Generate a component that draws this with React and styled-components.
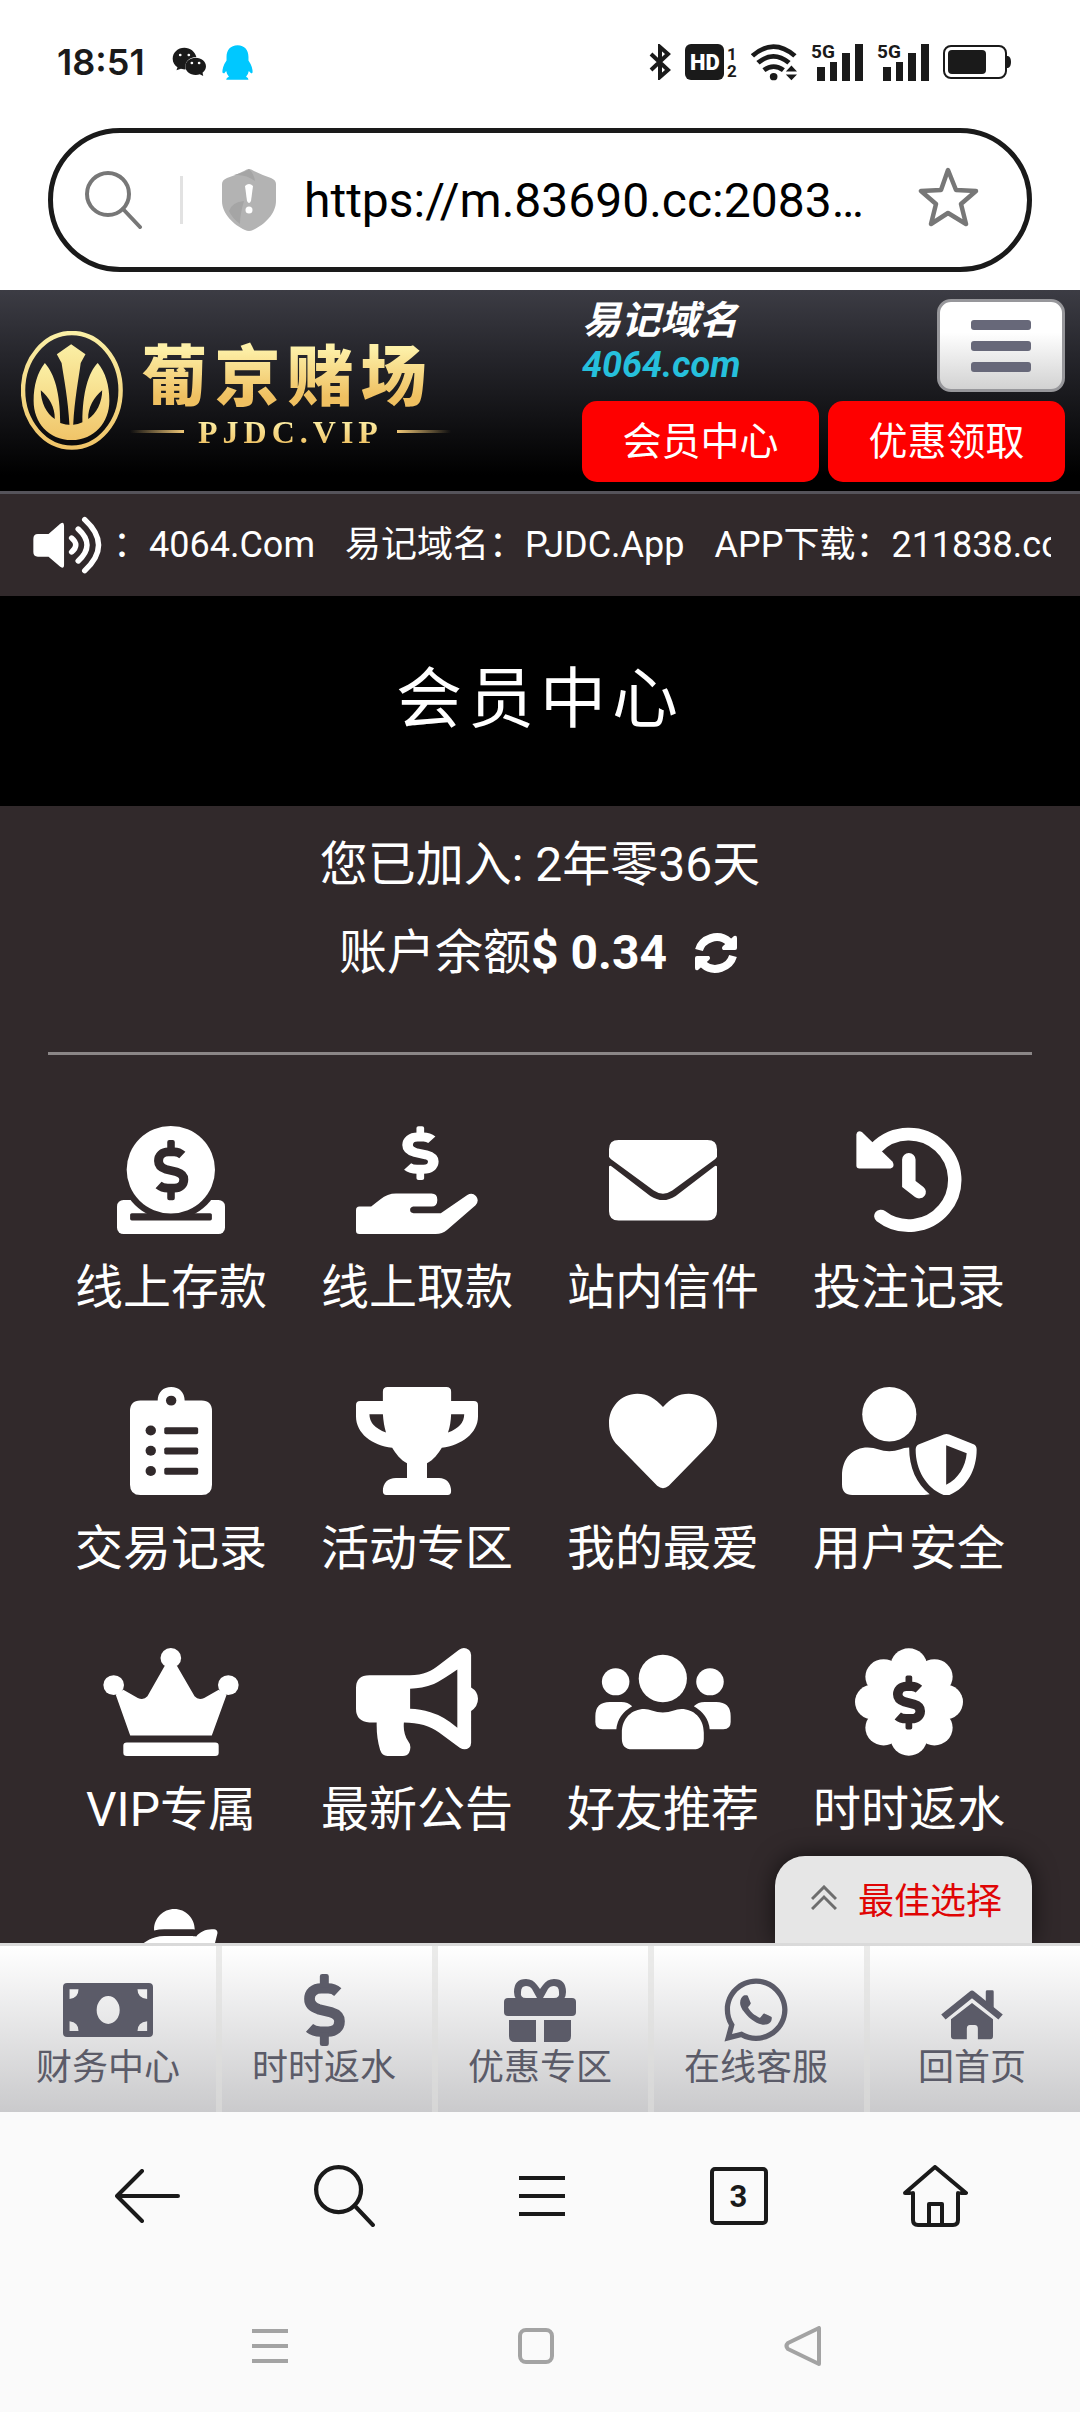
import React from "react";
import styled, { createGlobalStyle, css } from "styled-components";
import { FaWhatsapp } from "react-icons/fa";
import { FaPiggyBank } from "react-icons/fa6";

const INK = "#1a1a1a";
const BODY = "#31292b";
const SLATE = "#5b5b68";

const GlobalStyle = createGlobalStyle`
  *, *::before, *::after { box-sizing: border-box; }
  body {
    margin: 0;
    background: #fff;
    font-family: Roboto, "Noto Sans CJK SC", sans-serif;
    -webkit-font-smoothing: antialiased;
  }
  button, input { font: inherit; color: inherit; }
  svg { display: block; flex: none; }
`;

const plainButton = css`
  display: flex;
  align-items: center;
  justify-content: center;
  margin: 0;
  padding: 0;
  border: 0;
  background: none;
  cursor: pointer;
`;

/* ---------- frame ---------- */

const Page = styled.div`
  display: flex;
  flex-direction: column;
  height: 100vh;
  overflow: hidden;
`;

const StatusBar = styled.div`
  display: flex;
  align-items: center;
  justify-content: space-between;
  flex: none;
  height: 124px;
  padding: 0 69px 0 57px;
  color: ${INK};
`;

const StatusGroup = styled.div`
  display: flex;
  align-items: center;
  gap: ${(p) => p.$gap}px;
`;

const Clock = styled.time`
  margin-right: 12px;
  font: 600 36px/44px Inter, sans-serif;
`;

const AddressArea = styled.div`
  flex: none;
  padding: 4px 48px 18px;
`;

const AddressBar = styled.form`
  display: flex;
  align-items: center;
  height: 144px;
  padding: 0 48px 0 32px;
  border: 5px solid ${INK};
  border-radius: 72px;
`;

const IconButton = styled.button`
  ${plainButton}
  color: ${(p) => p.$tone || INK};
`;

const BarDivider = styled.span`
  width: 3px;
  height: 48px;
  margin: 0 39px 0 37px;
  background: #e2e2e2;
`;

const AddressInput = styled.input`
  flex: 1;
  min-width: 0;
  margin-left: 28px;
  padding: 2px 0 0;
  border: 0;
  outline: 0;
  background: none;
  color: #000;
  font-size: 48px;
  line-height: 64px;
`;

/* ---------- site header ---------- */

const SiteHeader = styled.header`
  display: flex;
  align-items: center;
  justify-content: space-between;
  flex: none;
  padding: 9px 15px 9px 21px;
  border-bottom: 3px solid #55535a;
  background: linear-gradient(#3c3c44, #26262c 32%, #000 92%);
  color: #fff;
`;

const Logo = styled.a`
  display: flex;
  align-items: center;
  gap: 7px;
  text-decoration: none;
`;

const Wordmark = styled.span`
  display: flex;
  flex-direction: column;
  align-items: center;
  gap: 4px;
  padding-top: 4px;
`;

const goldText = css`
  background: linear-gradient(#fdf0a8 20%, #efc061 85%);
  background-clip: text;
  -webkit-background-clip: text;
  color: transparent;
`;

const BrandName = styled.span`
  ${goldText}
  margin-right: 6px;
  font: 900 66px/74px "Noto Sans CJK SC", sans-serif;
  letter-spacing: 7px;
`;

const BrandDomain = styled.span`
  display: flex;
  align-items: center;
  gap: 14px;
`;

const BrandDomainText = styled.span`
  ${goldText}
  font: 700 32px/40px "Liberation Serif", serif;
  letter-spacing: 5px;
`;

const BrandRule = styled.span`
  width: 54px;
  height: 3px;
  background: linear-gradient(${(p) => p.$to}, transparent, #efc777);
`;

const HeaderActions = styled.div`
  display: grid;
  grid-template-columns: 1fr 1fr;
  gap: 9px;
  width: 483px;
`;

const HeaderTop = styled.div`
  grid-column: 1 / -1;
  display: flex;
  justify-content: space-between;
`;

const EasyDomain = styled.div`
  font-size: 39px;
  font-style: italic;
  font-weight: 700;
  line-height: 44px;
`;

const DomainLink = styled.a`
  display: block;
  color: #26c0dc;
  font-size: 36px;
  text-decoration: none;
`;

const MenuButton = styled.button`
  ${plainButton}
  flex-direction: column;
  gap: 11px;
  width: 128px;
  height: 93px;
  border: 3px solid #97979b;
  border-radius: 14px;
  background: linear-gradient(#fff 35%, #d2d2d2);
`;

const MenuLine = styled.span`
  width: 60px;
  height: 10px;
  border-radius: 3px;
  background: #676879;
`;

const RedButton = styled.button`
  ${plainButton}
  height: 81px;
  padding-bottom: 8px;
  border-radius: 15px;
  background: #fe0000;
  font-size: 39px;
`;

/* ---------- notice ---------- */

const Notice = styled.div`
  display: flex;
  align-items: center;
  flex: none;
  height: 102px;
  padding: 0 29px 0 33px;
  gap: 11px;
  background: ${BODY};
  color: #fff;
`;

const NoticeText = styled.p`
  display: flex;
  gap: 30px;
  flex: 1;
  min-width: 0;
  margin: 0;
  overflow: hidden;
  font-size: 36px;
  line-height: 56px;
  white-space: nowrap;
`;

/* ---------- member area ---------- */

const PageTitle = styled.h1`
  flex: none;
  height: 210px;
  margin: 0;
  background: #000;
  color: #fff;
  font-size: 66px;
  font-weight: 400;
  letter-spacing: 6px;
  line-height: 208px;
  text-align: center;
`;

const Main = styled.main`
  position: relative;
  flex: 1;
  min-height: 0;
  padding: 15px 48px 0;
  overflow: hidden;
  background: ${BODY};
  color: #fff;
`;

const Account = styled.section`
  display: flex;
  flex-direction: column;
  align-items: center;
  padding-bottom: 55px;
  border-bottom: 3px solid #8b8687;
  font-size: 48px;
`;

const AccountLine = styled.div`
  display: flex;
  align-items: center;
  line-height: 88px;
`;

const Refresh = styled.button`
  ${plainButton}
  padding: 0 4px 0 28px;
`;

const Tiles = styled.nav`
  display: grid;
  grid-template-columns: repeat(4, 1fr);
  row-gap: 71px;
  padding-top: 71px;
`;

const Tile = styled.a`
  display: flex;
  flex-direction: column;
  align-items: center;
  gap: 26px;
  color: #fff;
  font-size: 48px;
  line-height: 56px;
  text-decoration: none;
`;

const BestPick = styled.button`
  ${plainButton}
  position: absolute;
  right: 48px;
  bottom: 0;
  gap: 21px;
  width: 257px;
  height: 87px;
  padding: 0 0 4px 6px;
  border-radius: 30px 30px 0 0;
  background: #e6e6e6;
  box-shadow: 0 0 24px rgba(0, 0, 0, 0.6);
  color: #e00505;
  font-size: 36px;
`;

/* ---------- bottom bars ---------- */

const TabBar = styled.nav`
  display: grid;
  grid-template-columns: repeat(5, 1fr);
  flex: none;
  height: 169px;
  border-top: 3px solid #dadada;
  background: linear-gradient(#fff, #cacacc);
`;

const Tab = styled.a`
  display: flex;
  flex-direction: column;
  align-items: center;
  padding: 28px 6px 0 0;
  border-left: 6px solid rgba(222, 222, 220, 0.6);
  color: ${SLATE};
  font-size: 36px;
  line-height: 44px;
  text-decoration: none;

  &:first-child {
    padding-right: 0;
    border-left: 0;
  }
`;

const TabIcon = styled.span`
  display: flex;
  align-items: center;
  justify-content: center;
  height: 72px;
`;

const BrowserBar = styled.div`
  display: grid;
  grid-template-columns: repeat(5, 1fr);
  flex: none;
  height: 168px;
  padding: 0 46px 0 49px;
  background: #fafafa;
`;

const TabCount = styled.span`
  display: flex;
  align-items: center;
  justify-content: center;
  width: 58px;
  height: 58px;
  border: 4px solid ${INK};
  border-radius: 5px;
  font-size: 31px;
  font-weight: 700;
`;

const SystemBar = styled.div`
  display: grid;
  grid-template-columns: repeat(3, 1fr);
  flex: none;
  height: 132px;
  padding: 0 145px 0 137px;
  background: #fafafa;
`;

/* ---------- drawings ---------- */

function Glyph({ box, w, h, children, ...rest }) {
  return (
    <svg viewBox={box} width={w} height={h} preserveAspectRatio="none" fill="currentColor" aria-hidden="true" {...rest}>
      {children}
    </svg>
  );
}

function DollarShape({ transform, color = "currentColor", weight = 31 }) {
  return (
    <g transform={transform}>
      <path
        d="M98 54 Q86 43 70 43 H50 C29 43 16 56 16 75 C16 92 27 100 42 105 L78 114 C94 119 103 128 103 141 C103 160 90 172 70 172 H48 C34 172 25 169 16 161"
        fill="none"
        stroke={color}
        strokeWidth={weight}
      />
      <path d="M46 40 V7 Q46 0 53 0 H65 Q72 0 72 7 V40Z M46 175 V208 Q46 215 53 215 H65 Q72 215 72 208 V175Z" fill={color} />
    </g>
  );
}

const WeChat = () => (
  <Glyph box="498 141 102 90" w={35} h={30}>
    <path d="M534 143 C515 143 500 157 500 176 C500 188 506 196 514 202 L511 211 L524 206 Q535 209 538 208 C533 186 548 171 569 171 C565 154 551 143 534 143Z" />
    <path d="M567 173 C550 173 537 184 537 199 C537 214 550 225 567 225 Q574 225 579 223 L589 228 L587 218 Q597 210 597 199 C597 184 584 173 567 173Z" />
    <g fill="#fff">
      <circle cx="522" cy="165" r="4" />
      <circle cx="547" cy="165" r="4" />
      <circle cx="556" cy="189" r="4" />
      <circle cx="577" cy="189" r="4" />
    </g>
  </Glyph>
);

const Penguin = () => (
  <Glyph box="644 134 89 104" w={31} h={35} fill="#00c8ff">
    <path d="M689 135 C668 135 657 150 657 170 L657 180 Q645 198 645 216 L650 219 L656 211 Q658 222 664 228 Q656 231 656 237 H720 Q720 231 713 228 Q719 222 721 211 L728 219 L732 216 Q732 198 720 180 V170 C720 150 709 135 689 135Z" />
  </Glyph>
);

const Bluetooth = () => (
  <Glyph box="0 0 22 36" w={22} h={36}>
    <path d="M2 10 L19 26 L11 33 V3 L19 10 L2 26" fill="none" stroke="currentColor" strokeWidth="4" />
  </Glyph>
);

const HdBadge = () => (
  <svg width="52" height="44" viewBox="0 -3 52 44" fill={INK} fontFamily="Roboto, sans-serif" fontWeight="700">
    <rect x="0" y="1" width="39" height="36" rx="6" />
    <text x="5" y="27" fontSize="22" fontWeight="900" fill="#fff">HD</text>
    <text x="42" y="17" fontSize="17">1</text>
    <text x="42" y="34" fontSize="17">2</text>
  </svg>
);

const Wifi = () => (
  <Glyph box="612 130 132 112" w={46} h={37}>
    <g fill="none" stroke="currentColor" strokeWidth="14">
      <path d="M616 166 Q676 110 738 166" />
      <path d="M632 187 Q676 148 721 187" />
      <path d="M649 209 Q677 188 705 209" />
    </g>
    <circle cx="677" cy="229" r="11" />
    <path d="M728 195 L744 213 H712Z M728 240 L744 222 H712Z" />
  </Glyph>
);

const Signal = () => (
  <svg width="52" height="44" viewBox="0 -3 52 44" fill={INK}>
    <text x="0" y="15" fontFamily="Roboto, sans-serif" fontSize="19" fontWeight="700">5G</text>
    <path d="M6 24h8v14H6z M19 19h7v19h-7z M31 10h8v28h-8z M44 1h8v37h-8z" />
  </svg>
);

const Battery = () => (
  <svg width="68" height="36" viewBox="0 0 68 36">
    <rect x="1" y="2" width="62" height="32" rx="7" fill="none" stroke={INK} strokeWidth="2" />
    <rect x="5" y="6" width="38" height="24" rx="4" fill={INK} />
    <path d="M64 12 h1 q3 1 3 6 t-3 6 h-1z" fill={INK} />
  </svg>
);

const Magnifier = ({ size, weight }) => (
  <svg width={size} height={size} viewBox="0 0 58 58" fill="none" stroke="currentColor" strokeWidth={weight} strokeLinecap="round">
    <circle cx="23" cy="23" r="21" />
    <path d="M38 38 L55 56" />
  </svg>
);

const ShieldAlert = () => (
  <svg width="54" height="62" viewBox="0 0 54 62">
    <path d="M27 0 Q29 0 32 2 Q40 6 49 9 Q54 11 54 15 V32 C54 45 42 56 31 61 Q27 63 23 61 C12 56 0 45 0 32 V15 Q0 11 5 9 Q14 6 22 2 Q25 0 27 0Z" fill="#b3b3b3" />
    <path d="M12 6 Q24 3 27 0 Q32 5 33 12 Q24 5 12 6Z M7 42 Q10 33 22 32 Q18 45 18 55 Q10 49 7 42Z" fill="#a5a5a5" />
    <path d="M23 17 Q27 13 31 17 L29 32 Q27 36 25 32Z" fill="#fff" />
    <circle cx="27" cy="41" r="3.5" fill="#fff" />
  </svg>
);

const Star = () => (
  <svg width="61" height="66" viewBox="0 0 61 66" fill="none" stroke="#777" strokeWidth="4.5" strokeLinejoin="round">
    <path d="M30 3 L38 23 L58 24 L43 37 L48 57 L30 46 L13 57 L18 37 L3 24 L23 23Z" />
  </svg>
);

const Emblem = () => (
  <Glyph box="60 126 299 357" w={102} h={119}>
    <defs>
      <linearGradient id="gold" x1="0" y1="0" x2="0" y2="1">
        <stop offset="0" stopColor="#fbf0a6" />
        <stop offset="1" stopColor="#f0c468" />
      </linearGradient>
    </defs>
    <ellipse cx="209" cy="304" rx="143" ry="172" fill="none" stroke="url(#gold)" strokeWidth="13" />
    <path fill="url(#gold)" d="M207 166 L249 196 L235 222 C229 270 217 330 213 408 H202 C198 330 186 270 179 222 L165 196Z" />
    <path
      fill="url(#gold)"
      fillRule="evenodd"
      d="M130 222 C108 250 97 290 97 335 C97 400 140 453 209 453 C275 453 319 400 319 335 C319 290 308 250 285 222 C258 250 240 310 240 400 Q225 408 209 408 Q190 408 175 402 C175 310 158 255 130 222Z M118 304 C118 340 135 375 159 390 C160 355 142 325 118 304Z M298 304 C298 340 281 375 257 390 C256 355 274 325 298 304Z"
    />
  </Glyph>
);

const Speaker = () => (
  <Glyph box="96 676 200 174" w={69} h={58}>
    <path d="M97 745 Q97 730 110 730 H141 L175 699 Q186 691 186 705 V824 Q186 836 175 828 L141 798 H110 Q97 798 97 784Z" />
    <g fill="none" stroke="currentColor" strokeWidth="16" strokeLinecap="round">
      <path d="M208 742 Q232 763 208 784" />
      <path d="M227 715 Q278 763 227 811" />
      <path d="M246 687 Q326 763 246 840" />
    </g>
  </Glyph>
);

const RefreshIcon = () => (
  <svg width="42" height="40" viewBox="0 0 42 40" fill="none" stroke="#fff" strokeWidth="8">
    <path d="M4 17 C7 6 23 -1 34 9" />
    <path d="M38 23 C35 34 19 41 8 31" />
    <path fill="#fff" stroke="none" d="M39 3 Q42 2 42 5 V15 Q42 17 40 17 H28 Q26 15 28 13Z M3 37 Q0 38 0 35 V25 Q0 23 2 23 H14 Q16 25 14 27Z" />
  </svg>
);

const Deposit = () => (
  <Glyph box="340 138 313 326" w={108} h={108}>
    <defs>
      <mask id="coin-slot">
        <rect x="340" y="138" width="313" height="327" fill="#fff" />
        <ellipse cx="496" cy="269" rx="147" ry="152" fill="#000" />
        <rect x="378" y="401" width="237" height="22" rx="5" fill="#000" />
      </mask>
    </defs>
    <rect x="340" y="361" width="313" height="103" rx="19" mask="url(#coin-slot)" />
    <ellipse cx="496" cy="270" rx="128" ry="132" />
    <DollarShape transform="translate(447 180) scale(.84 .846)" color={BODY} />
  </Glyph>
);

const Withdraw = () => (
  <Glyph box="1034 138 354 326" w={122} h={108}>
    <DollarShape transform="translate(1170 139) scale(.857 .753)" weight={36} />
    <path d="M1034 392 Q1034 381 1044 381 H1078 L1105 359 Q1125 342 1150 342 H1253 Q1270 342 1270 361 Q1270 381 1253 381 H1200 Q1191 383 1191 391 Q1191 401 1201 401 H1280 L1357 346 Q1371 337 1382 349 Q1393 363 1381 377 L1298 452 Q1285 464 1265 464 H1044 Q1034 464 1034 454Z" />
  </Glyph>
);

const Mail = () => (
  <Glyph box="200 138 314 326" w={108} h={108}>
    <path d="M200 231 V208 Q200 180 228 180 H486 Q514 180 514 208 V231 Q512 235 508 238 L384 333 Q357 352 330 333 L206 238 Q202 235 200 231Z" />
    <path d="M200 260 Q203 256 208 260 L320 349 Q357 374 394 349 L506 260 Q511 256 514 260 V395 Q514 423 486 423 H228 Q200 423 200 395Z" />
  </Glyph>
);

const History = () => (
  <Glyph box="915 138 313 326" w={108} h={108}>
    <path d="M977 203 A133 138 0 1 1 990 410" fill="none" stroke="currentColor" strokeWidth="39" strokeLinecap="round" />
    <path d="M919 164 Q922 150 935 156 L1024 246 Q1032 262 1018 266 H928 Q919 266 919 257Z" />
    <path d="M1071 239 V313 L1101 337" fill="none" stroke="currentColor" strokeWidth="39" strokeLinecap="round" />
  </Glyph>
);

const Clipboard = () => (
  <Glyph box="378 922 237 325" w={82} h={108}>
    <path d="M378 995 Q378 963 408 963 H458 C458 938 474 922 497 922 C520 922 536 938 536 963 H585 Q615 963 615 995 V1216 Q615 1247 585 1247 H408 Q378 1247 378 1216Z" />
    <g fill={BODY}>
      <circle cx="497" cy="963" r="15" />
      {[1053, 1114, 1175].map((y) => (
        <React.Fragment key={y}>
          <circle cx="438" cy={y} r="15" />
          <rect x="477" y={y - 10} width="98" height="21" rx="5" />
        </React.Fragment>
      ))}
    </g>
  </Glyph>
);

const Trophy = () => (
  <Glyph box="1034 921 354 326" w={122} h={108}>
    <path
      fillRule="evenodd"
      d="M1112 935 Q1112 921 1126 921 H1296 Q1310 921 1310 935 V963 H1376 Q1388 963 1388 975 V1010 C1388 1060 1340 1098 1283 1104 C1272 1122 1260 1140 1240 1151 V1196 H1275 C1296 1196 1310 1212 1310 1235 Q1310 1247 1300 1247 H1122 Q1112 1247 1112 1235 C1112 1212 1126 1196 1150 1196 H1182 V1151 C1162 1140 1150 1122 1139 1104 C1080 1098 1034 1060 1034 1010 V975 Q1034 963 1046 963 H1112Z M1073 1003 H1112 Q1114 1035 1121 1058 Q1073 1040 1073 1003Z M1310 1003 H1348 Q1348 1040 1301 1058 Q1309 1035 1310 1003Z"
    />
  </Glyph>
);

const Heart = () => (
  <Glyph box="200 922 316 325" w={108} h={108}>
    <path d="M358 982 C335 955 312 942 283 942 C233 942 200 985 200 1030 C200 1060 208 1078 226 1098 L341 1219 Q358 1234 375 1219 L490 1098 C508 1078 516 1060 516 1030 C516 985 483 942 433 942 C404 942 381 955 358 982Z" />
  </Glyph>
);

const UserShield = () => (
  <Glyph box="875 922 394 325" w={135} h={108}>
    <ellipse cx="1013" cy="1004" rx="79" ry="82" />
    <path d="M875 1190 C875 1135 907 1104 950 1104 Q968 1104 980 1109 Q1013 1122 1046 1109 Q1055 1104 1071 1104 C1071 1165 1092 1212 1131 1245 Q1120 1247 1115 1247 H905 Q875 1247 875 1215Z" />
    <path
      fillRule="evenodd"
      d="M1172 1065 Q1180 1062 1188 1065 L1259 1094 Q1268 1098 1268 1110 C1268 1170 1240 1225 1190 1246 Q1180 1250 1170 1246 C1120 1225 1090 1170 1090 1110 Q1090 1098 1100 1094Z M1179 1097 V1216 C1215 1198 1236 1160 1239 1121Z"
    />
  </Glyph>
);

const Crown = () => (
  <Glyph box="299 144 395 326" w={136} h={108}>
    <circle cx="496" cy="174" r="30" />
    <circle cx="330" cy="256" r="30" />
    <circle cx="663" cy="256" r="30" />
    <path d="M378 408 L336 285 L358 270 L400 295 Q417 303 428 290 L478 198 H514 L565 290 Q576 303 593 295 L635 270 L658 285 L615 408Z" />
    <rect x="358" y="429" width="277" height="41" rx="10" />
  </Glyph>
);

const Bullhorn = () => (
  <Glyph box="1034 144 354 326" w={122} h={108}>
    <path
      fillRule="evenodd"
      d="M1034 265 Q1034 226 1073 226 H1190 C1230 226 1255 212 1275 195 L1333 149 Q1348 139 1362 150 Q1368 156 1368 165 V263 Q1388 275 1388 297 Q1388 320 1368 334 V430 Q1368 440 1362 445 Q1350 455 1335 445 L1275 399 C1250 380 1215 369 1173 369 Q1170 400 1185 425 Q1197 440 1188 460 Q1182 470 1170 470 H1125 Q1110 470 1104 452 Q1093 415 1094 369 H1073 Q1034 365 1034 328Z M1191 267 Q1225 267 1260 253 Q1285 240 1328 209 V385 Q1290 350 1250 338 Q1220 327 1191 327Z"
    />
  </Glyph>
);

const sideFriend = "M161 350 Q161 307 203 307 H236 Q256 307 268 320 Q226 345 222 389 H182 Q161 389 161 367Z";

const Friends = () => (
  <Glyph box="160 144 395 326" w={136} h={108}>
    <ellipse cx="357" cy="236" rx="70" ry="72" />
    <ellipse cx="220" cy="246" rx="40" ry="41" />
    <ellipse cx="494" cy="246" rx="40" ry="41" />
    <path d="M238 400 C238 355 268 328 303 328 Q316 328 325 333 Q357 345 389 333 Q398 328 411 328 C446 328 476 355 476 400 V418 Q476 450 446 450 H268 Q238 450 238 418Z" />
    <path d={sideFriend} />
    <path d={sideFriend} transform="translate(715 0) scale(-1 1)" />
  </Glyph>
);

const RebateBadge = () => (
  <Glyph box="915 144 313 326" w={108} h={108}>
    <circle cx="1071" cy="307" r="110" />
    {[[1071, 198], [1071, 416], [968, 307], [1175, 307], [998, 231], [1145, 231], [998, 385], [1145, 385]].map(([x, y]) => (
      <circle key={`${x}-${y}`} cx={x} cy={y} r="53" />
    ))}
    <DollarShape transform="translate(1027 227) scale(.748 .758)" color={BODY} weight={37} />
  </Glyph>
);

const Banknote = () => (
  <Glyph box="183 1152 261 161" w={90} h={54}>
    <path
      fillRule="evenodd"
      d="M183 1164 Q183 1152 195 1152 H432 Q444 1152 444 1164 V1301 Q444 1313 432 1313 H195 Q183 1313 183 1301Z M202 1171 V1200 Q228 1197 228 1171Z M427 1171 V1200 Q399 1197 399 1171Z M202 1295 V1266 Q228 1269 228 1295Z M427 1295 V1266 Q399 1269 399 1295Z M314 1191 A33 41 0 1 0 314 1274 A33 41 0 1 0 314 1191Z"
    />
  </Glyph>
);

const Dollar = () => (
  <Glyph box="0 0 119 215" w={41} h={72}>
    <DollarShape />
  </Glyph>
);

const Gift = () => (
  <Glyph box="0 0 72 63" w={72} h={63}>
    <path d="M5 41 H32 V63 H11 Q5 63 5 57Z M40 41 H67 V57 Q67 63 61 63 H40Z" />
    <rect x="0" y="19" width="72" height="18" rx="4" />
    <path
      fillRule="evenodd"
      d="M12 20 Q10 17 10 13 Q10 0 22 0 Q29 0 33 6 L36 10 L39 6 Q43 0 50 0 Q62 0 62 13 Q62 17 60 20Z M17 13 Q16 19 22 19 H33 L28 10 Q26 7 22 7 Q17 7 17 13Z M55 13 Q55 7 50 7 Q46 7 44 10 L39 19 H50 Q56 19 55 13Z"
    />
  </Glyph>
);

const House = () => (
  <Glyph box="1164 1124 180 216" w={62} h={72}>
    <path d="M1171 1253 L1254 1184 L1337 1253" fill="none" stroke="currentColor" strokeWidth="20" strokeLinejoin="round" />
    <path d="M1294 1177 Q1294 1173 1298 1173 H1313 Q1317 1173 1317 1177 V1232 L1294 1212Z" />
    <path d="M1193 1260 L1254 1211 L1315 1260 V1310 Q1315 1320 1307 1320 H1271 V1288 Q1271 1277 1262 1277 H1248 Q1239 1277 1239 1288 V1320 H1202 Q1193 1320 1193 1311Z" />
  </Glyph>
);

const UpChevrons = () => (
  <svg width="26" height="25" viewBox="0 0 26 25" fill="none" stroke="#6e6e6e" strokeWidth="3">
    <path d="M1 14 L13 2 L25 14 M1 24 L13 12 L25 24" />
  </svg>
);

const lineArt = { fill: "none", stroke: "currentColor", strokeWidth: 4, strokeLinecap: "round", strokeLinejoin: "round" };

const BackArrow = () => (
  <svg width="65" height="54" viewBox="0 0 65 54" {...lineArt}>
    <path d="M27 2 L2 27 L27 52 M2 27 H63" />
  </svg>
);

const Lines = () => (
  <svg width="46" height="40" viewBox="0 0 46 40" {...lineArt} strokeLinecap="butt">
    <path d="M0 2 H46 M0 20 H46 M0 38 H46" />
  </svg>
);

const HomeOutline = () => (
  <svg width="65" height="62" viewBox="0 0 65 62" {...lineArt}>
    <path d="M7 28 H2 L32 2 L63 28 H58 M10 28 V55 Q10 60 15 60 H50 Q55 60 55 55 V28 M26 59 V39 H39 V59" />
  </svg>
);

const notices = ["：4064.Com", "易记域名：PJDC.App", "APP下载：211838.com"];

const tiles = [
  ["线上存款", Deposit],
  ["线上取款", Withdraw],
  ["站内信件", Mail],
  ["投注记录", History],
  ["交易记录", Clipboard],
  ["活动专区", Trophy],
  ["我的最爱", Heart],
  ["用户安全", UserShield],
  ["VIP专属", Crown],
  ["最新公告", Bullhorn],
  ["好友推荐", Friends],
  ["时时返水", RebateBadge],
];

const tabs = [
  ["财务中心", Banknote],
  ["时时返水", Dollar],
  ["优惠专区", Gift],
  ["在线客服", () => <FaWhatsapp size={72} />],
  ["回首页", House],
];

export default function App() {
  return (
    <Page>
      <GlobalStyle />

      <StatusBar>
        <StatusGroup $gap={15}>
          <Clock>18:51</Clock>
          <WeChat />
          <Penguin />
        </StatusGroup>
        <StatusGroup $gap={14}>
          <Bluetooth />
          <HdBadge />
          <Wifi />
          <Signal />
          <Signal />
          <Battery />
        </StatusGroup>
      </StatusBar>

      <AddressArea>
        <AddressBar onSubmit={(e) => e.preventDefault()}>
          <IconButton type="submit" aria-label="搜索" $tone="#777">
            <Magnifier size={58} weight={4} />
          </IconButton>
          <BarDivider />
          <ShieldAlert />
          <AddressInput type="text" aria-label="网址" defaultValue="https://m.83690.cc:2083…" />
          <IconButton type="button" aria-label="收藏">
            <Star />
          </IconButton>
        </AddressBar>
      </AddressArea>

      <SiteHeader>
        <Logo href="#">
          <Emblem />
          <Wordmark>
            <BrandName>葡京赌场</BrandName>
            <BrandDomain>
              <BrandRule $to="to right" />
              <BrandDomainText>PJDC.VIP</BrandDomainText>
              <BrandRule $to="to left" />
            </BrandDomain>
          </Wordmark>
        </Logo>
        <HeaderActions>
          <HeaderTop>
            <EasyDomain>
              易记域名
              <DomainLink href="#">4064.com</DomainLink>
            </EasyDomain>
            <MenuButton type="button" aria-label="菜单">
              <MenuLine />
              <MenuLine />
              <MenuLine />
            </MenuButton>
          </HeaderTop>
          <RedButton type="button">会员中心</RedButton>
          <RedButton type="button">优惠领取</RedButton>
        </HeaderActions>
      </SiteHeader>

      <Notice>
        <Speaker />
        <NoticeText>
          {notices.map((text) => (
            <span key={text}>{text}</span>
          ))}
        </NoticeText>
      </Notice>

      <PageTitle>会员中心</PageTitle>

      <Main>
        <Account>
          <AccountLine>您已加入: 2年零36天</AccountLine>
          <AccountLine>
            账户余额<b>$ 0.34</b>
            <Refresh type="button" aria-label="刷新">
              <RefreshIcon />
            </Refresh>
          </AccountLine>
        </Account>
        <Tiles>
          {tiles.map(([label, Icon]) => (
            <Tile key={label} href="#">
              <Icon />
              {label}
            </Tile>
          ))}
          <Tile href="#">
            <FaPiggyBank size={122} viewBox="0 0 576 576" />
          </Tile>
        </Tiles>
        <BestPick type="button">
          <UpChevrons />
          最佳选择
        </BestPick>
      </Main>

      <TabBar>
        {tabs.map(([label, Icon]) => (
          <Tab key={label} href="#">
            <TabIcon>
              <Icon />
            </TabIcon>
            {label}
          </Tab>
        ))}
      </TabBar>

      <BrowserBar>
        <IconButton type="button" aria-label="后退"><BackArrow /></IconButton>
        <IconButton type="button" aria-label="搜索"><Magnifier size={62} weight={4} /></IconButton>
        <IconButton type="button" aria-label="菜单"><Lines /></IconButton>
        <IconButton type="button" aria-label="标签页"><TabCount>3</TabCount></IconButton>
        <IconButton type="button" aria-label="主页"><HomeOutline /></IconButton>
      </BrowserBar>

      <SystemBar>
        <IconButton type="button" aria-label="最近任务">
          <svg width="36" height="34" viewBox="0 0 36 34" stroke="#a3a3a3" strokeWidth="4">
            <path d="M0 2 H36 M0 17 H36 M0 32 H36" />
          </svg>
        </IconButton>
        <IconButton type="button" aria-label="桌面">
          <svg width="36" height="36" viewBox="0 0 36 36" fill="none" stroke="#a3a3a3" strokeWidth="4">
            <rect x="2" y="2" width="32" height="32" rx="6" />
          </svg>
        </IconButton>
        <IconButton type="button" aria-label="返回">
          <svg width="37" height="40" viewBox="0 0 37 40" fill="none" stroke="#a3a3a3" strokeWidth="4" strokeLinejoin="round">
            <path d="M35 2 V38 L4 23 Q1 20 4 17Z" />
          </svg>
        </IconButton>
      </SystemBar>
    </Page>
  );
}
